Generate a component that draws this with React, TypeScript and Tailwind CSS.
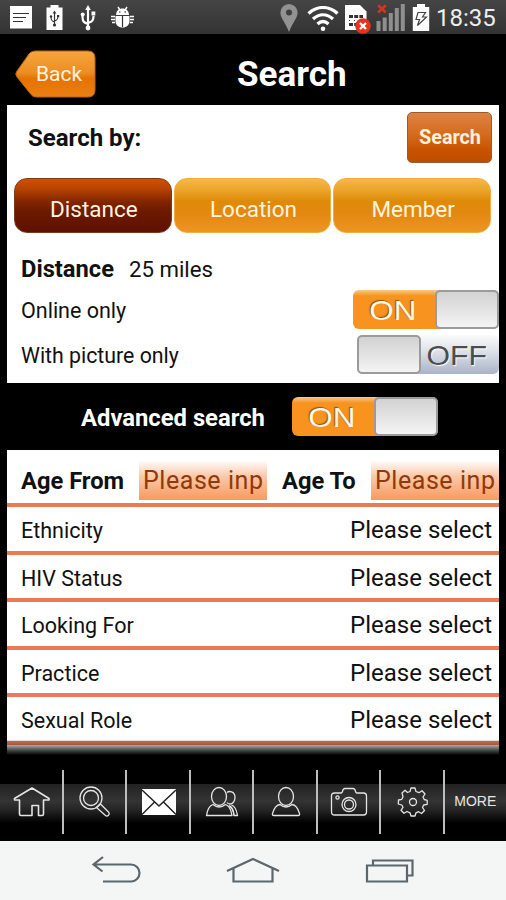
import type { ReactNode } from "react";
import clsx from "clsx";

const FIELDS = ["Ethnicity", "HIV Status", "Looking For", "Practice", "Sexual Role"];

function StatusBar() {
  return (
    <div className="flex h-[34px] items-start bg-gradient-to-b from-[#454545] to-[#333333] text-white">
      <svg className="ml-[10px] mt-[6px]" width="23" height="23" viewBox="0 0 23 23">
        <rect width="22" height="22.5" fill="#fff" />
        <path d="M3 7.5h16M3 11.5h13M3 15.5h10" stroke="#333" strokeWidth="1.1" />
      </svg>
      <svg className="ml-[13px] mt-[4px]" width="18" height="27" viewBox="0 0 18 27">
        <path d="M4.500 1h8v2.500h4v22.500h-16v-22.500h4z" fill="#fff" />
        <path d="M8.500 9v12M8.500 18c-3-1-3.500-2-3.500-5M8.500 17c3-1 3.500-2 3.500-5" stroke="#333" fill="none" strokeWidth="1.200" />
        <path d="M8.500 6.500l1.800 3H6.700z" fill="#333" />
        <circle cx="8.500" cy="21" r="1.600" fill="#333" />
        <circle cx="5" cy="12.500" r="1.200" fill="#333" />
        <rect x="11" y="11" width="2.200" height="2.200" fill="#333" />
      </svg>
      <svg className="ml-[16px] mt-[5px]" width="16" height="27" viewBox="0 0 16 27">
        <path d="M8 4v19M8 19c-4.500-1.500-5.500-2.500-5.500-8M8 18c4.500-1.500 5.500-2.500 5.500-7" stroke="#fff" fill="none" strokeWidth="2.200" />
        <path d="M8 0l2.800 5H5.200z" fill="#fff" />
        <circle cx="8" cy="23" r="2.400" fill="#fff" />
        <circle cx="2.700" cy="9.500" r="2" fill="#fff" />
        <rect x="11.500" y="6.500" width="3.800" height="4" fill="#fff" />
      </svg>
      <svg className="ml-[14px] mt-[6px]" width="26" height="23" viewBox="0 0 26 23">
        <path d="M8 1l2 3M17 1l-2 3" stroke="#fff" strokeWidth="1.400" />
        <path d="M6 9c.3-4.500 3-6.500 6.500-6.500S18.700 4.500 19 9z" fill="#fff" />
        <path d="M5.500 10h14v5c0 4-3 6.500-7 6.500s-7-2.500-7-6.500z" fill="#fff" />
        <path d="M12.500 10v11" stroke="#333" strokeWidth="1.200" />
        <path d="M5 10.500H1M5 13.500H1M5 16.500H2M20 10.500h4M20 13.500h4M20 16.500h3" stroke="#fff" strokeWidth="1.500" />
        <circle cx="9.800" cy="6" r=".8" fill="#333" />
        <circle cx="15.200" cy="6" r=".8" fill="#333" />
      </svg>

      <svg className="ml-auto mt-[4px]" width="18" height="29" viewBox="0 0 18 29">
        <path fillRule="evenodd" d="M9 0a8.600 8.600 0 0 1 8.600 8.600C17.600 14 12.500 19 9 28 5.500 19 .4 14 .4 8.600A8.600 8.600 0 0 1 9 0zm0 5.500a3 3 0 1 0 0 6 3 3 0 0 0 0-6z" fill="#929292" />
      </svg>
      <svg className="ml-[9px] mt-[6px]" width="32" height="26" viewBox="0 0 32 26">
        <path d="M1.500 7.500c8.500-8 20.500-8 29 0M6 13c6-5.700 14-5.700 20 0M10.500 18c3.500-3.200 7.500-3.200 11 0" stroke="#fff" strokeWidth="3.200" fill="none" />
        <circle cx="16" cy="22.700" r="2.300" fill="#fff" />
      </svg>
      <svg className="ml-[5px] mt-[4px]" width="28" height="31" viewBox="0 0 28 31">
        <path d="M1 1h15l6.500 6.500V26H1z" fill="#fff" />
        <path d="M5 12.500h14" stroke="#333" strokeWidth="3" strokeDasharray="4 1.200" />
        <path d="M5 20.500h14" stroke="#333" strokeWidth="3" strokeDasharray="4 1.200" />
        <path d="M5 16.500h14" stroke="#333" strokeWidth="1" strokeDasharray="1 4" />
        <circle cx="19" cy="22" r="7.800" fill="#e8331c" />
        <path d="M16 19l6 6M22 19l-6 6" stroke="#fff" strokeWidth="2.400" />
      </svg>
      <svg className="ml-[4px] mt-[3px]" width="30" height="29" viewBox="0 0 30 29">
        <path d="M2.500 28V18M8.700 28V14.500M14.800 28V10M20.800 28V5M26.800 28V1" stroke="#8f8f8f" strokeWidth="4" />
        <path d="M2.200 2.200l7.600 7.300M9.800 2.200L2.200 9.500" stroke="#d5351d" strokeWidth="2.600" />
      </svg>
      <svg className="ml-[6px] mt-[4px]" width="18" height="28" viewBox="0 0 18 28">
        <path d="M5 0h8v3h4.200v24H.8V3H5z" fill="#fff" />
        <path d="M6 8.500h7.500L10.500 13h4L5.500 21.500l2-6H4z" fill="none" stroke="#444" strokeWidth="1.200" />
      </svg>
      <span className="ml-[6px] mr-[9px] mt-[1px] w-[61px] whitespace-nowrap text-[24px] leading-[35px] text-[#eee]">18:35</span>
    </div>
  );
}

function Header() {
  return (
    <header className="flex h-[71px] items-center pt-[11px]">
      <button className="relative ml-[14px] mt-[-3px] h-[48px] w-[82px] text-[21px] text-[#fff3e0]">
        <svg className="absolute inset-0" width="82" height="48" viewBox="0 0 82 48">
          <defs>
            <linearGradient id="back" x1="0" y1="0" x2="0" y2="1">
              <stop offset="0" stopColor="#f6a53d" />
              <stop offset=".48" stopColor="#eb8d22" />
              <stop offset=".6" stopColor="#e57300" />
              <stop offset="1" stopColor="#e98014" />
            </linearGradient>
          </defs>
          <path d="M18.500 1.500Q20 1 22 1H74q7 0 7 7V40q0 7-7 7H22q-3 0-5-2.500L3 27Q.5 24 3 21L15 4Q16.500 2 18.500 1.500z" fill="url(#back)" stroke="#b9640e" strokeWidth="1" />
        </svg>
        <span className="relative left-[4px] top-[1px]">Back</span>
      </button>
      <h1 className="ml-[141px] mt-[-1px] text-[35px] font-bold leading-none text-white">Search</h1>
    </header>
  );
}

function Tab({ children, active }: { children: ReactNode; active?: boolean }) {
  return (
    <button
      className={clsx(
        "h-[55px] flex-1 rounded-[13px] border pl-[2px] pt-[9px] text-[22.500px] text-[#fff3dc]",
        active
          ? "border-[#7a3a1c] bg-[linear-gradient(#d45000_0%,#b84400_18%,#832600_42%,#6d1a00_60%,#5e1000_100%)]"
          : "border-[#f0ac3c] bg-[linear-gradient(#f6b848_0%,#eba62c_20%,#df8a08_42%,#e38811_65%,#ee9422_100%)]"
      )}
    >
      {children}
    </button>
  );
}

function Toggle({ on, className }: { on?: boolean; className?: string }) {
  const thumb = <span className="h-full w-[64px] shrink-0 rounded-[5px] border-2 border-[#9b9b9b] bg-gradient-to-b from-[#d2d2d2] to-[#f4f4f4]" />;
  if (on) {
    return (
      <div className={clsx("flex h-[39px] w-[146px] rounded-[6px] bg-[linear-gradient(#fbc88c_0,#f7931e_6px,#f7931e_100%)]", className)}>
        <span className="flex-1 scale-x-112 pr-[2px] text-center font-['Liberation_Sans'] text-[28px] leading-[41px] text-[#fff6e8] [text-shadow:-1px_-1px_1px_#8a5410]">
          ON
        </span>
        {thumb}
      </div>
    );
  }
  return (
    <div className={clsx("flex h-[39px] w-[142px] rounded-[6px] bg-[linear-gradient(#fbfbfc_0%,#dfe2e9_40%,#a9b4c8_100%)]", className)}>
      {thumb}
      <span className="flex-1 origin-center scale-x-108 pr-[6px] text-center font-['Liberation_Sans'] text-[28px] leading-[42px] text-[#4d4d4d] [text-shadow:1px_1px_1px_#fff]">
        OFF
      </span>
    </div>
  );
}

function SearchPanel() {
  return (
    <section className="mx-[7px] h-[278px] bg-white">
      <div className="flex h-[73px] items-start justify-between pl-[21px] pr-[7px] pt-[7px]">
        <h2 className="text-[24px] font-bold leading-[53px]">Search by:</h2>
        <button className="h-[51px] w-[85px] rounded-[5px] border border-[#9a5a2c] bg-[linear-gradient(#dc8344_0%,#d56a1c_45%,#c85300_75%,#bd4d00_100%)] pl-[1px] pt-[1px] text-[19.800px] font-bold text-[#fff0dc]">
          Search
        </button>
      </div>
      <div className="flex gap-[2px] pl-[7px] pr-[8px]">
        <Tab active>Distance</Tab>
        <Tab>Location</Tab>
        <Tab>Member</Tab>
      </div>
      <div className="flex h-[52px] items-end pl-[14px] text-[22.200px] leading-[32px]">
        <b className="w-[108px] text-[23.700px]">Distance</b>
        <span>25 miles</span>
      </div>
      <div className="mt-[5px] flex h-[39px] items-center justify-between pl-[14px]">
        <span className="pt-[3px] text-[21.500px]">Online only</span>
        <Toggle on />
      </div>
      <div className="mt-[6px] flex h-[39px] items-center justify-between pl-[14px]">
        <span className="pt-[3px] text-[21.300px]">With picture only</span>
        <Toggle />
      </div>
    </section>
  );
}

function AgeInput() {
  return (
    <div className="flex h-[40px] w-[128px] bg-[linear-gradient(#fff_0%,#fbc9a9_40%,#f79a5f_100%)] px-[4px]">
      <span className="w-full overflow-hidden whitespace-nowrap text-[25px] leading-[42px] tracking-[0.550px] text-[#91390c]">Please input</span>
    </div>
  );
}

function FieldList() {
  return (
    <section className="relative mx-[7px] h-[305px] overflow-hidden bg-white">
      <div className="flex h-[57px] items-start border-b-4 border-[#ec7a58] pl-[14px] pt-[10px] text-[23.700px] font-bold leading-[43px]">
        <span className="w-[118px]">Age From</span>
        <div className="font-normal"><AgeInput /></div>
        <span className="w-[104px] pl-[15px]">Age To</span>
        <div className="font-normal"><AgeInput /></div>
      </div>
      {FIELDS.map((name) => (
        <div key={name} className="flex h-[47.500px] items-center justify-between border-b-4 border-[#ec7a58] pl-[14px] pr-[7px] pt-[4px]">
          <span className="mt-[1px] text-[21.500px]">{name}</span>
          <span className="mt-[-1px] text-[24px]">Please select</span>
        </div>
      ))}
      <div className="absolute inset-x-0 bottom-0 h-[15px] bg-[linear-gradient(rgba(0,0,0,0.120)_0,rgba(0,0,0,0.250)_4px,rgba(0,0,0,0.700)_10px,#000_100%)]" />
    </section>
  );
}

function NavItem({ children }: { children: ReactNode }) {
  return (
    <div className="flex h-[64px] w-[63.500px] shrink-0 items-center justify-center border-r-2 border-[#bdbdbd] pl-[2px] last:w-[61.500px] last:border-r-0 last:pl-0">
      {children}
    </div>
  );
}

function NavIcon({ children }: { children: ReactNode }) {
  return (
    <svg width="38" height="32" viewBox="0 0 38 32" fill="none" stroke="#e4e4e4" strokeWidth="1.300" strokeLinejoin="round">
      {children}
    </svg>
  );
}

function BottomNav() {
  return (
    <nav className="flex h-[86px] bg-[linear-gradient(#000_29px,#222_29px,#343434_46px,#222_56px,#000_68px)] pt-[15px]">
      <NavItem>
        <NavIcon>
          <path strokeWidth="1.600" d="M19 2L1.500 12.500v1.500H6.500V28q0 1.500 1.500 1.500h11V19.500h6.500V29.500h3.500q1.500 0 1.500-1.500V14h5.500v-1.500z" />
        </NavIcon>
      </NavItem>
      <NavItem>
        <NavIcon>
          <circle cx="15" cy="12" r="11" />
          <circle cx="15" cy="12" r="7.500" />
          <path d="M20.500 21.500l9 8q1.500 1.300 3-.2t.2-3L24 17.500M20.500 21.500l3.500-3.500" />
        </NavIcon>
      </NavItem>
      <NavItem>
        <NavIcon>
          <rect x="2" y="3" width="34" height="26" fill="#fff" stroke="none" />
          <path stroke="#222" strokeWidth="1.500" d="M2 4l17 16L36 4M2 28.500l12.500-12.500M36 28.500L23.500 16" />
        </NavIcon>
      </NavItem>
      <NavItem>
        <NavIcon>
          <path d="M24 6.500c1.500-1.500 8-2 8 5 0 4-2.500 6.500-5 6.500q-2 0-3-1.500M28.500 19q4.500 1.500 6 10.500H31q-.5-7-5-10" />
          <ellipse cx="16" cy="10.500" rx="7.500" ry="9" />
          <path d="M10 18.500q-5 1.500-6.500 11h25.500q-1.500-9.500-6.500-11Q16 23.500 10 18.500zM27 20q3.500 3 4 9.500" />
        </NavIcon>
      </NavItem>
      <NavItem>
        <NavIcon>
          <ellipse cx="19" cy="10.500" rx="7.500" ry="9" />
          <path d="M13 18.500q-5 .5-7.500 9-.5 2 1.500 2h24q2 0 1.500-2-2.500-8.500-7.500-9Q19 23.500 13 18.500z" />
        </NavIcon>
      </NavItem>
      <NavItem>
        <NavIcon>
          <path d="M4.500 7H11q1 0 1.500-1.500Q13 2.500 15 2.500h8q2 0 2.500 3Q26 7 27 7h6.500Q36.500 7 36.500 10V26q0 3-3 3h-29q-3 0-3-3V10Q1.500 7 4.500 7z" />
          <circle cx="19" cy="18.500" r="7" />
          <circle cx="19" cy="18.500" r="4.500" />
          <circle cx="7.500" cy="11.500" r="1.600" />
        </NavIcon>
      </NavItem>
      <NavItem>
        <NavIcon>
          <path d="M16 5.500L17 2h4l1 3.500 3 1.200 3-2 3 3.300-2 3 1.200 2.500 3 .8v4l-3.500.7-1.200 2.500 2 3-3 3-3-1.800-2.500 1.100-1 3.200h-4l-1-3.200-3-1.300-3 1.800-3-3 2-3-1.200-2.300-3.500-1 .2-4 3.300-.7 1.200-2.600L8 7l3-2.700 2.500 2.200z" />
          <circle cx="19" cy="16" r="3.500" />
        </NavIcon>
      </NavItem>
      <NavItem>
        <span className="mt-[-2px] font-['Liberation_Sans'] text-[14px] text-[#e6e6e6]">MORE</span>
      </NavItem>
    </nav>
  );
}

function SystemNav() {
  return (
    <div className="flex h-[59px] items-start bg-[#f4f5f5] pt-[14px]">
      <svg className="ml-[91px]" width="51" height="32" viewBox="0 0 51 32" fill="none" stroke="#5c666d" strokeWidth="2.200">
        <path d="M12 2L2.500 9.500l9 7M2.500 9.500H40a8.500 8.500 0 0 1 0 17H12" />
      </svg>
      <svg className="ml-[83px]" width="56" height="32" viewBox="0 0 56 32" fill="none" stroke="#5c666d" strokeWidth="2.200">
        <path d="M2 16L28 4l26 12M8.500 13.500V26.500h39V13.500" />
      </svg>
      <svg className="ml-[84px]" width="50" height="32" viewBox="0 0 50 32" fill="none" stroke="#5c666d" strokeWidth="2.200">
        <path d="M8 10V5.500h39.500V20.500h-5M2 10.500h40v16H2z" />
      </svg>
    </div>
  );
}

export default function App() {
  return (
    <main className="h-[900px] w-[506px] overflow-hidden bg-black font-[Roboto,sans-serif] text-[#111]">
      <StatusBar />
      <Header />
      <SearchPanel />
      <div className="flex h-[67px] items-center pl-[81px]">
        <span className="w-[211px] pt-[4px] text-[23.800px] font-bold text-white">Advanced search</span>
        <Toggle on />
      </div>
      <FieldList />
      <BottomNav />
      <SystemNav />
    </main>
  );
}
